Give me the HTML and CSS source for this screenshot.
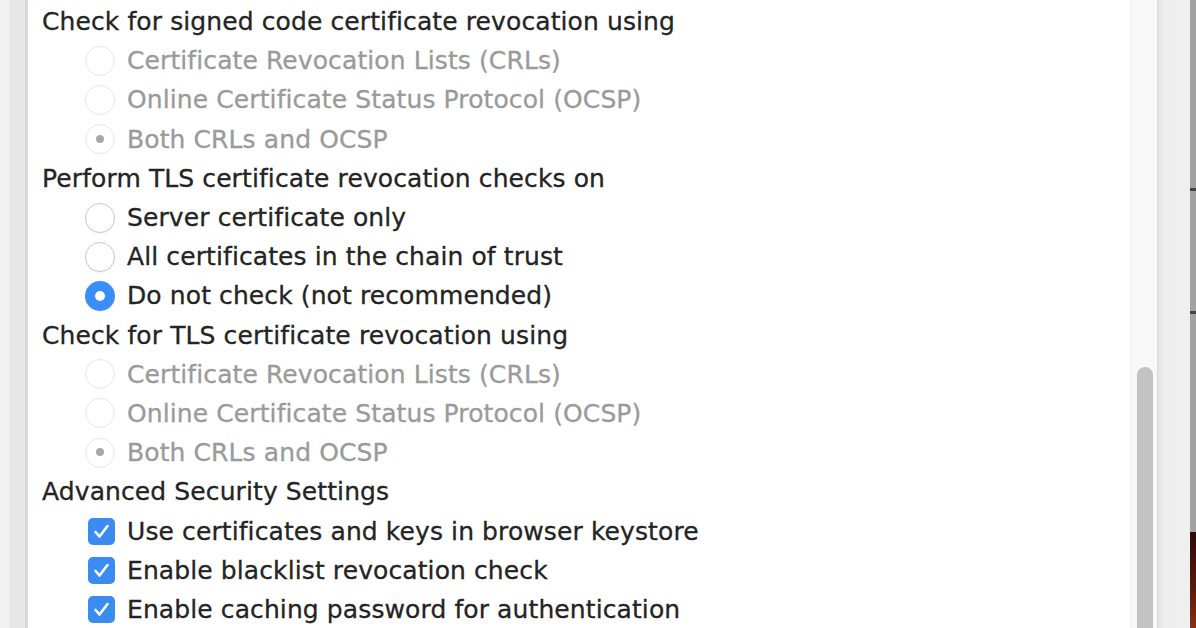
FILE: index.html
```html
<!DOCTYPE html>
<html>
<head>
<meta charset="utf-8">
<link rel="stylesheet" href="styles.css">
</head>
<body>
<div class="window">
  <div class="sidebar"></div>
  <div class="content">
    <div class="row heading">Check for signed code certificate revocation using</div>
    <div class="row item disabled"><span class="radio"></span><span class="label">Certificate Revocation Lists (CRLs)</span></div>
    <div class="row item disabled"><span class="radio"></span><span class="label">Online Certificate Status Protocol (OCSP)</span></div>
    <div class="row item disabled"><span class="radio on"></span><span class="label">Both CRLs and OCSP</span></div>
    <div class="row heading">Perform TLS certificate revocation checks on</div>
    <div class="row item"><span class="radio"></span><span class="label">Server certificate only</span></div>
    <div class="row item"><span class="radio"></span><span class="label">All certificates in the chain of trust</span></div>
    <div class="row item"><span class="radio on"></span><span class="label">Do not check (not recommended)</span></div>
    <div class="row heading">Check for TLS certificate revocation using</div>
    <div class="row item disabled"><span class="radio"></span><span class="label">Certificate Revocation Lists (CRLs)</span></div>
    <div class="row item disabled"><span class="radio"></span><span class="label">Online Certificate Status Protocol (OCSP)</span></div>
    <div class="row item disabled"><span class="radio on"></span><span class="label">Both CRLs and OCSP</span></div>
    <div class="row heading">Advanced Security Settings</div>
    <div class="row item"><span class="check"><svg viewBox="0 0 27 27" width="27" height="27"><path d="M7.5 14 L11.5 18.5 L19.5 8" fill="none" stroke="#fff" stroke-width="2.6" stroke-linecap="round" stroke-linejoin="round"/></svg></span><span class="label">Use certificates and keys in browser keystore</span></div>
    <div class="row item"><span class="check"><svg viewBox="0 0 27 27" width="27" height="27"><path d="M7.5 14 L11.5 18.5 L19.5 8" fill="none" stroke="#fff" stroke-width="2.6" stroke-linecap="round" stroke-linejoin="round"/></svg></span><span class="label">Enable blacklist revocation check</span></div>
    <div class="row item"><span class="check"><svg viewBox="0 0 27 27" width="27" height="27"><path d="M7.5 14 L11.5 18.5 L19.5 8" fill="none" stroke="#fff" stroke-width="2.6" stroke-linecap="round" stroke-linejoin="round"/></svg></span><span class="label">Enable caching password for authentication</span></div>
  </div>
  <div class="scrollbar"><div class="thumb"></div></div>
  <div class="gutter"></div>
  <div class="edge">
    <span class="tick tick1"></span>
    <span class="tick tick2"></span>
    <div class="photo"></div>
  </div>
</div>
</body>
</html>
```
FILE: styles.css
```css
html, body {
  margin: 0;
  padding: 0;
  width: 1196px;
  height: 628px;
  overflow: hidden;
  background: #ffffff;
}
.window {
  display: flex;
  width: 1196px;
  height: 628px;
}
.sidebar {
  width: 26px;
  flex: none;
  background: linear-gradient(to right, #f1f1f1 0, #f1f1f1 10px, #e7e7e7 10px, #e7e7e7 25px, #d6d6d6 25px);
  border-right: 2px solid #d9d9d9;
}
.content {
  flex: 1;
  min-width: 0;
  overflow: hidden;
  background: #ffffff;
  padding: 2px 0 0 14px;
  font-family: "DejaVu Sans", "Liberation Sans", sans-serif;
  font-size: 25px;
  letter-spacing: 0.1px;
  color: #242424;
  -webkit-text-stroke: 0.3px currentColor;
  display: flex;
  flex-direction: column;
}
.row {
  height: 39.2px;
  flex: none;
  display: flex;
  align-items: center;
  white-space: nowrap;
}
.item {
  padding-left: 43px;
}
.item .label {
  margin-left: 12px;
}
.disabled {
  color: #9a9a9a;
}
.radio {
  width: 30px;
  height: 30px;
  border-radius: 50%;
  box-sizing: border-box;
  border: 1.5px solid #c9c9c9;
  background: #fff;
  flex: none;
  position: relative;
  box-shadow: 0 1px 1px rgba(0,0,0,0.06);
}
.disabled .radio {
  border-color: #e6e6e6;
  box-shadow: none;
}
.radio.on {
  border: none;
  background: #3a8ef6;
}
.radio.on::after {
  content: "";
  position: absolute;
  left: 10px;
  top: 10px;
  width: 10px;
  height: 10px;
  border-radius: 50%;
  background: #ffffff;
}
.disabled .radio.on {
  background: #ffffff;
  border: 1.5px solid #e6e6e6;
}
.disabled .radio.on::after {
  left: 9.5px;
  top: 9.5px;
  width: 8px;
  height: 8px;
  background: #a8a8a8;
}
.check {
  width: 27px;
  height: 27px;
  border-radius: 5px;
  background: #3b8cf0;
  flex: none;
  display: flex;
  margin-left: 3px;
}
.check + .label {
  margin-left: 12px;
}
.scrollbar {
  width: 26px;
  flex: none;
  border-left: 1px solid #efefef;
  border-right: 1px solid #dadada;
  background: #f8f8f8;
  position: relative;
}
.thumb {
  position: absolute;
  left: 6px;
  width: 16px;
  top: 367px;
  bottom: -20px;
  border-radius: 8px;
  background: #c3c3c3;
}
.gutter {
  width: 32px;
  flex: none;
  background: linear-gradient(to right, #e3e3e3 0, #eeeeee 6px, #efefef 100%);
}
.edge {
  width: 6px;
  flex: none;
  background: #a2a2a2;
  position: relative;
}
.tick {
  position: absolute;
  left: 0;
  width: 6px;
  height: 3px;
  background: #444;
}
.tick1 { top: 188px; }
.tick2 { top: 311px; }
.photo {
  position: absolute;
  left: 0;
  right: 0;
  top: 532px;
  bottom: 0;
  background: linear-gradient(to bottom, #2a0a08, #5a1a10 60%, #8a3018);
}
```
